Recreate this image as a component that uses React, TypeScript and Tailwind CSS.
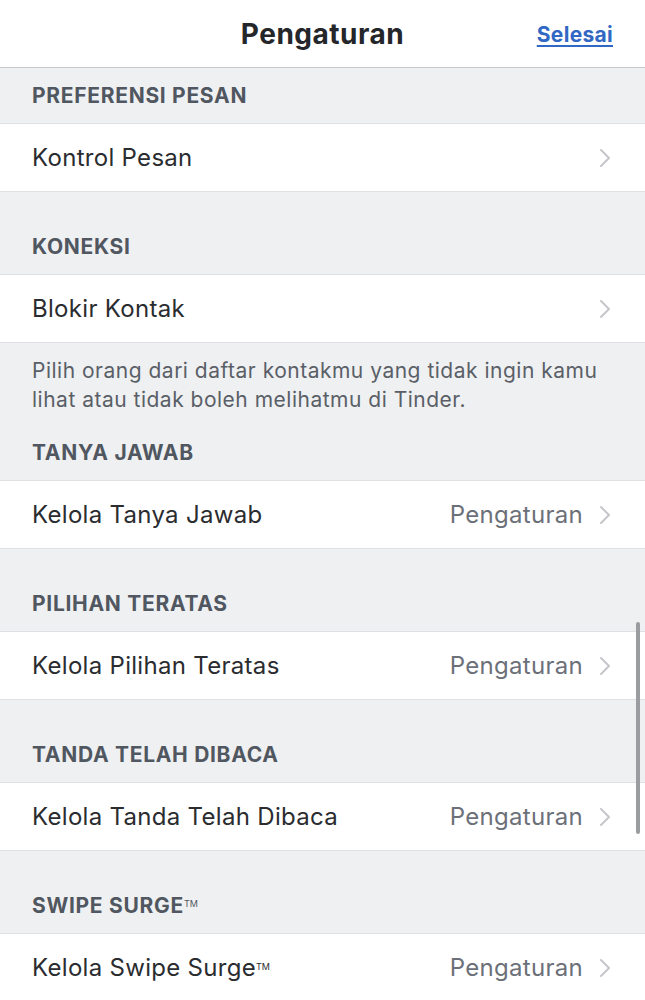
import React from "react";

const font = { fontFamily: "Inter, 'Open Sans', sans-serif" };

function Chevron() {
  return (
    <svg width="12" height="20" viewBox="0 0 12 20" className="shrink-0">
      <polyline points="2,2 10,10 2,18" fill="none" stroke="#c4c6ca" strokeWidth="2" strokeLinecap="round" strokeLinejoin="round" />
    </svg>
  );
}

function Header({ title, h }: { title: React.ReactNode; h: string }) {
  return (
    <div className={`${h} flex items-end pb-[13px] px-8 bg-[#eff0f2]`}>
      <div className="text-[21px] leading-[28px] font-bold text-[#505760] tracking-[0.7px]">{title}</div>
    </div>
  );
}

function Row({ label, value }: { label: React.ReactNode; value?: string }) {
  return (
    <div className="h-[69px] bg-white border-y border-[#dfe0e3] flex items-center pl-8 pr-[34px]">
      <div className="flex-1 text-[24px] text-[#2a2c30] tracking-[0.3px]">{label}</div>
      {value && <div className="text-[24px] text-[#6c7078] mr-[16px] tracking-[0.3px]">{value}</div>}
      <Chevron />
    </div>
  );
}

const TM = () => <sup className="text-[9px] font-normal relative -top-[6px] tracking-normal">TM</sup>;

export default function App() {
  return (
    <div className="relative w-[645px] h-[1000px] overflow-hidden bg-[#eff0f2]" style={font}>
      <div className="h-[68px] bg-white border-b border-[#c6c8cc] flex items-center justify-center relative">
        <div className="text-[28px] font-bold text-[#24262a] tracking-[0.5px]">Pengaturan</div>
        <div className="absolute right-8 top-[19px] text-[21px] font-bold text-[#3068c4] underline underline-offset-[3px] tracking-[0.3px]">Selesai</div>
      </div>
      <Header title="PREFERENSI PESAN" h="h-[55px]" />
      <Row label="Kontrol Pesan" />
      <Header title="KONEKSI" h="h-[82px]" />
      <Row label="Blokir Kontak" />
      <div className="h-[71px] px-8 pt-[13px] text-[21px] leading-[29px] text-[#5a5f67] tracking-[0.5px]">
        Pilih orang dari daftar kontakmu yang tidak ingin kamu lihat atau tidak boleh melihatmu di Tinder.
      </div>
      <Header title="TANYA JAWAB" h="h-[66px]" />
      <Row label="Kelola Tanya Jawab" value="Pengaturan" />
      <Header title="PILIHAN TERATAS" h="h-[82px]" />
      <Row label="Kelola Pilihan Teratas" value="Pengaturan" />
      <Header title="TANDA TELAH DIBACA" h="h-[82px]" />
      <Row label="Kelola Tanda Telah Dibaca" value="Pengaturan" />
      <Header title={<>SWIPE SURGE<TM /></>} h="h-[82px]" />
      <Row label={<>Kelola Swipe Surge<TM /></>} value="Pengaturan" />
      <div className="absolute right-[5px] top-[622px] w-[4px] h-[212px] rounded-full bg-[#9a9ca0]" />
    </div>
  );
}
